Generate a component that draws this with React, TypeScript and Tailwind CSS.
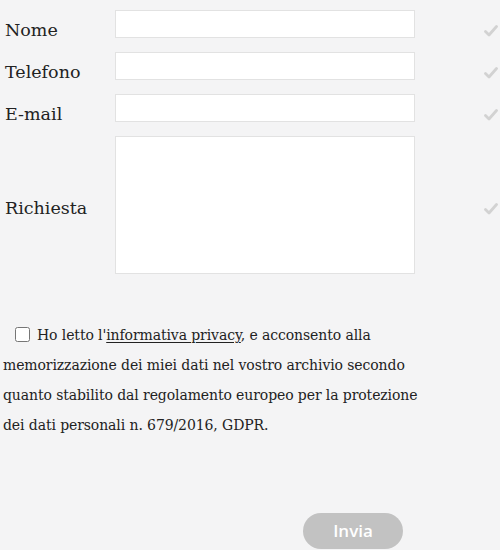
import React from 'react';

const Check: React.FC = () => (
  <svg width="14" height="12" viewBox="0 0 14 12" className="shrink-0">
    <path d="M1.5 6.5 L5 10 L12.5 1.5" fill="none" stroke="#d2d2d2" strokeWidth="2.8" strokeLinecap="round" strokeLinejoin="round" />
  </svg>
);

const fields = ['Nome', 'Telefono', 'E-mail'];

const App: React.FC = () => {
  return (
    <div className="w-[500px] h-[550px] bg-[#f4f4f5] text-[#222] overflow-hidden" style={{ fontFamily: '"DejaVu Serif", serif' }}>
      <div className="flex flex-col gap-[14px] pt-[10px]">
        {fields.map((f) => (
          <div key={f} className="flex items-center h-[28px]">
            <label className="w-[115px] pl-[5px] text-[17.5px] leading-none pt-[13px]">{f}</label>
            <input className="w-[300px] h-[28px] bg-white border border-[#e2e2e2] outline-none" />
            <div className="ml-[69px] pt-[13px]">
              <Check />
            </div>
          </div>
        ))}
        <div className="flex items-center h-[138px]">
          <label className="w-[115px] pl-[5px] text-[17.5px] leading-none pt-[8px]">Richiesta</label>
          <textarea className="w-[300px] h-[138px] bg-white border border-[#e2e2e2] outline-none resize-none" />
          <div className="ml-[69px] pt-[8px]">
            <Check />
          </div>
        </div>
      </div>

      <p className="mt-[46px] pl-[3px] w-[424px] text-[14px] leading-[30px] tracking-[-0.1px]">
        <span className="inline-block w-[12px]" />
        <input type="checkbox" className="w-[15px] h-[15px] align-[-2px] mr-[7px] accent-white" />
        Ho letto l'<a className="underline underline-offset-2 decoration-1">informativa privacy</a>, e acconsento alla memorizzazione dei miei dati nel vostro archivio secondo quanto stabilito dal regolamento europeo per la protezione dei dati personali n. 679/2016, GDPR.
      </p>

      <div className="flex justify-end pr-[97px] mt-[73px]">
        <button className="w-[100px] h-[36px] rounded-full bg-[#c2c2c2] text-white text-[17px] font-semibold" style={{ fontFamily: '"Open Sans", sans-serif' }}>
          Invia
        </button>
      </div>
    </div>
  );
};

export default App;
